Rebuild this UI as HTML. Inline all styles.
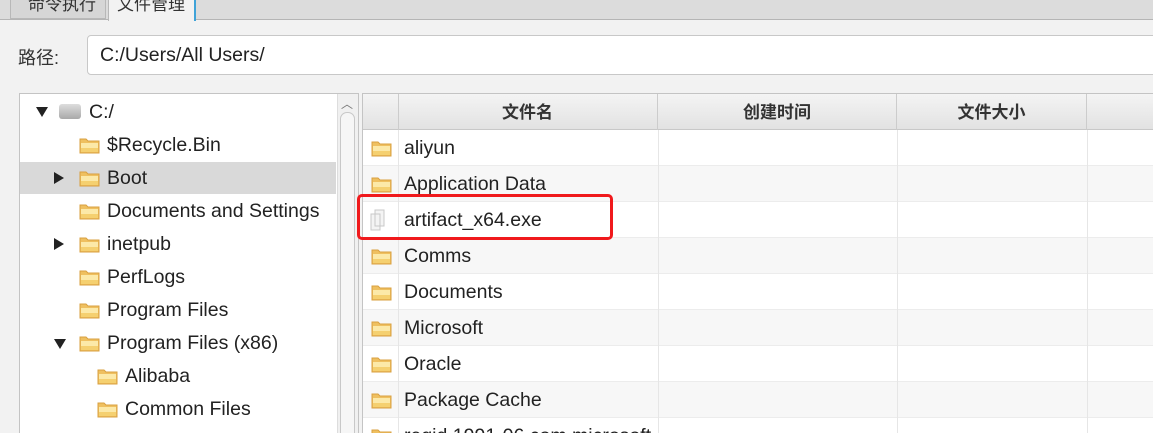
<!DOCTYPE html>
<html><head><meta charset="utf-8"><style>
*{margin:0;padding:0;box-sizing:border-box}
html,body{width:1153px;height:433px;overflow:hidden}
body{background:#f2f2f2;font-family:"Liberation Sans","Noto Sans CJK SC",sans-serif;color:#222;position:relative}
.a{position:absolute}
.t{font-size:19.5px;white-space:nowrap}
</style></head><body>
<div class="a" style="left:0;top:0;width:1153px;height:20px;background:#dcdcdc;border-bottom:1px solid #b5b5b5"></div>
<div class="a" style="left:10px;top:-6px;width:96px;height:25px;background:#d6d6d6;border:1px solid #b8b8b8;font-size:17px;padding-left:17px;line-height:20px;color:#333">命令执行</div>
<div class="a" style="left:108px;top:-6px;width:88px;height:27px;background:#f2f2f2;border:1px solid #b8b8b8;border-right:2px solid #3fa3d8;border-bottom:none;font-size:17px;padding-left:8px;line-height:20px;color:#333">文件管理</div>
<div class="a t" style="left:18px;top:44px;color:#333;font-size:18px">路径:</div>
<div class="a" style="left:87px;top:35px;width:1080px;height:40px;background:#fff;border:1px solid #c8c8c8;border-radius:4px"></div>
<div class="a t" style="left:100px;top:44px;color:#222">C:/Users/All Users/</div>

<div class="a" style="left:19px;top:93px;width:340px;height:345px;background:#fff;border:1px solid #c4c4c4"></div>
<div class="a" style="left:20px;top:162px;width:316px;height:32px;background:#d9d9d9"></div>
<div class="a" style="left:337px;top:94px;width:21px;height:340px;background:#f0f0f0;border-left:1px solid #ddd"></div>
<div class="a" style="left:341px;top:95px;font-size:12px;color:#777">︿</div>
<div class="a" style="left:340px;top:112px;width:15px;height:330px;background:#f6f6f6;border:1px solid #c8c8c8;border-radius:7px"></div>

<div class="a" style="left:36px;top:107px;width:0;height:0;border-left:6px solid transparent;border-right:6px solid transparent;border-top:10px solid #222"></div>
<div class="a" style="left:59px;top:104px;width:22px;height:15px;background:linear-gradient(#ddd,#a9a9a9);border-radius:3px"></div>
<div class="a t" style="left:89px;top:101px">C:/</div>

<div id="tree"></div>

<div class="a" style="left:362px;top:93px;width:800px;height:345px;background:#fff;border-left:1px solid #c4c4c4;border-top:1px solid #c4c4c4"></div>
<div class="a" style="left:363px;top:94px;width:790px;height:36px;background:linear-gradient(#f4f4f4,#e2e2e2);border-bottom:1px solid #c8c8c8"></div>
<div id="hdr"></div>
<div id="rows"></div>

<div class="a" style="left:357px;top:194px;width:256px;height:46px;border:3px solid #f0191c;border-radius:5px"></div>

<script>
function folder(x,y){return '<svg class="a" style="left:'+x+'px;top:'+y+'px" width="21" height="17" viewBox="0 0 21 17"><path d="M1 2h6l2 2h11v12H1z" fill="#efc060" stroke="#d9a040"/><rect x="2" y="6" width="17" height="9" fill="#fce9a8"/><rect x="2" y="11" width="17" height="4" fill="#f5d070"/></svg>';}
var tree=[["$Recycle.Bin",79,0],["Boot",79,1],["Documents and Settings",79,0],["inetpub",79,1],["PerfLogs",79,0],["Program Files",79,0],["Program Files (x86)",79,2],["Alibaba",97,0],["Common Files",97,0]];
var h='';tree.forEach(function(r,i){var cy=145+i*33;
if(r[2]==1)h+='<div class="a" style="left:54px;top:'+(cy-6)+'px;border-top:6px solid transparent;border-bottom:6px solid transparent;border-left:10px solid #222"></div>';
if(r[2]==2)h+='<div class="a" style="left:54px;top:'+(cy-4)+'px;border-left:6px solid transparent;border-right:6px solid transparent;border-top:10px solid #222"></div>';
h+=folder(r[1],cy-8)+'<div class="a t" style="left:'+(r[1]+28)+'px;top:'+(cy-11)+'px">'+r[0]+'</div>';});
document.getElementById('tree').innerHTML=h;
var cols=[[398,658,"文件名"],[658,897,"创建时间"],[897,1087,"文件大小"],[1087,1160,""]];
h='<div class="a" style="left:398px;top:94px;width:1px;height:36px;background:#ccc"></div>';
cols.forEach(function(c){h+='<div class="a" style="left:'+c[0]+'px;top:94px;width:'+(c[1]-c[0])+'px;height:36px;border-right:1px solid #ccc;text-align:center;font-weight:bold;font-size:17px;line-height:38px;color:#333">'+c[2]+'</div>';});
document.getElementById('hdr').innerHTML=h;
var rows=["aliyun","Application Data","artifact_x64.exe","Comms","Documents","Microsoft","Oracle","Package Cache","regid.1991-06.com.microsoft"];
h='';rows.forEach(function(r,i){var top=130+i*36;
h+='<div class="a" style="left:363px;top:'+top+'px;width:790px;height:36px;background:'+(i%2?'#f7f7f7':'#fff')+';border-bottom:1px solid #ececec"></div>';
[398,658,897,1087].forEach(function(x){h+='<div class="a" style="left:'+x+'px;top:'+top+'px;width:1px;height:36px;background:#e6e6e6"></div>';});
if(i==2)h+='<svg class="a" style="left:368px;top:'+(top+7)+'px" width="20" height="22" viewBox="0 0 20 22"><path d="M7 1h9v16H7z M3 5h9v16H3z" fill="#f4f4f4" stroke="#c8c8c8"/></svg>';
else h+=folder(371,top+10);
h+='<div class="a t" style="left:404px;top:'+(top+7)+'px">'+r+'</div>';});
document.getElementById('rows').innerHTML=h;
</script>
</body></html>
